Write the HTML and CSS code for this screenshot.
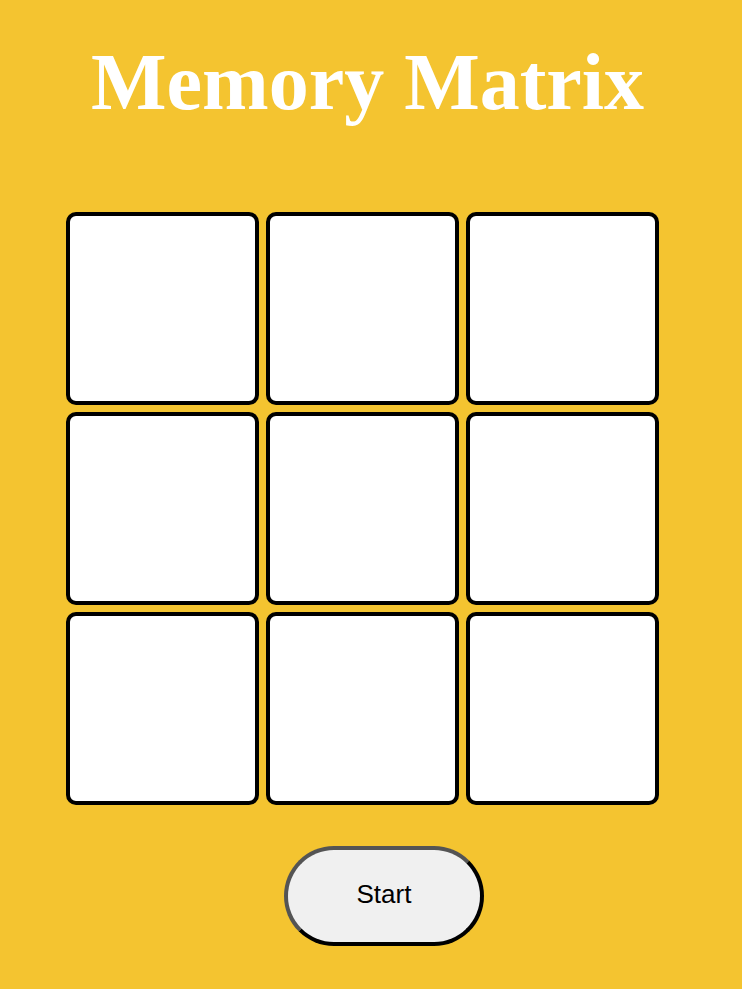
FILE: index.html
```html
<!DOCTYPE html>
<html lang="en">
<head>
    <meta charset="UTF-8">
    <meta name="viewport" content="width=device-width, initial-scale=1.0">
    <title>Memory Matrix</title>
    <link rel="stylesheet" href="styles.css">
</head>
<body>
    <h1 class="title">Memory Matrix</h1>
    <div class="grid" id="grid">
        <div class="cell"></div>
        <div class="cell"></div>
        <div class="cell"></div>
        <div class="cell"></div>
        <div class="cell"></div>
        <div class="cell"></div>
        <div class="cell"></div>
        <div class="cell"></div>
        <div class="cell"></div>
    </div>
    <div class="controls">
        <button class="start-btn" id="startBtn">Start</button>
    </div>
</body>
</html>
```

FILE: styles.css
```css
body {
    margin: 0;
    padding: 36px 0 0;
    background-color: #f4c430;
    font-family: 'Liberation Serif', 'Times New Roman', serif;
    min-height: 100vh;
    box-sizing: border-box;
}

.title {
    margin: 0;
    padding-right: 7px;
    text-align: center;
    color: #fff;
    font-size: 80px;
    font-weight: bold;
    line-height: 92px;
}

.grid {
    display: grid;
    grid-template-columns: repeat(3, 193px);
    grid-auto-rows: 193px;
    gap: 7px;
    margin: 84px 0 0 66px;
}

.cell {
    background-color: #fff;
    border: 4px solid #000;
    border-radius: 10px;
}

.controls {
    margin-top: 41px;
    padding-left: 284px;
}

.start-btn {
    width: 200px;
    height: 100px;
    border: 4px outset #000;
    border-radius: 50px;
    background-color: #f0f0f0;
    color: #000;
    font-family: 'Liberation Sans', Arial, sans-serif;
    font-size: 26px;
    line-height: 26px;
    padding: 0 0 4px;
    cursor: pointer;
}
```
